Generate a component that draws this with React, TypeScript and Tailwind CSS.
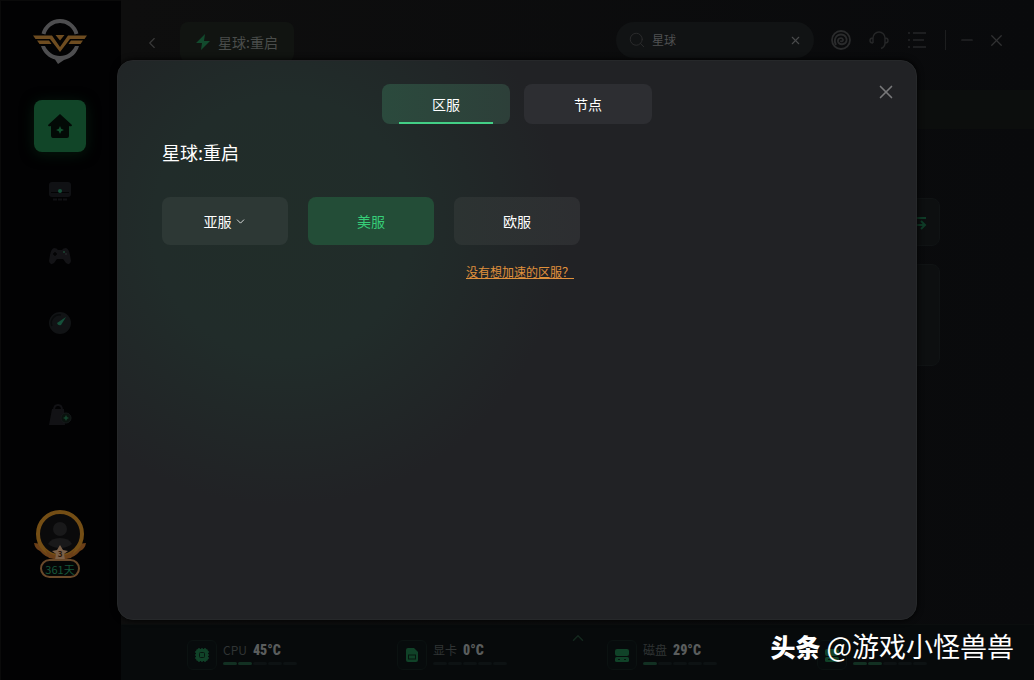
import { ChevronDown, ChevronLeft, ChevronUp, Minus, Search, X } from "lucide-react";

const sideLinks = [
  { label: "电脑", icon: <MonitorIcon />, gap: "mt-[25px]" },
  { label: "主机", icon: <GamepadIcon />, gap: "mt-[38px]" },
  { label: "测速", icon: <GaugeIcon />, gap: "mt-[38px]" },
  { label: "商城", icon: <BagIcon />, gap: "mt-[64px]" },
];

const stats = [
  { label: "CPU", value: "45°C", on: 2, icon: <CpuIcon /> },
  { label: "显卡", value: "0°C", on: 0, icon: <CardIcon /> },
  { label: "磁盘", value: "29°C", on: 1, icon: <DiskIcon /> },
  { label: "", value: "", on: 2, icon: <DiskIcon /> },
];

function Logo() {
  return (
    <svg width="54" height="46" viewBox="0 0 54 46" aria-hidden="true">
      <path d="M10.5 15A17 17 0 0 1 43.500 15" fill="none" stroke="#4e4e50" strokeWidth="4" />
      <path d="M8 27C10 34 16 39 22 40.500L25 45L31 41C39 39 44 34 46 27L42 27C39 33 34 37 27 37S15 33 12 27Z" fill="#4e4e50" />
      <path
        d="M0 16.500H19L27 28L35 16.500H54L51.500 20H37L27 33L17 20H2.500ZM4 21.500H16L18.500 25H6.500ZM38 21.500H50L47.500 25H35.500ZM22.500 16H31.500L27 21.500Z"
        fill="#6e4c20"
      />
    </svg>
  );
}

function HomeIcon() {
  return (
    <svg width="26" height="26" viewBox="0 0 26 26" aria-hidden="true">
      <path d="M13 1L1 12Q1 14 4 13V22Q4 25 6 25H20Q22 25 22 23V13Q25 14 25 12Z" fill="#030a06" />
      <path d="M13 13L14.2 15.8L17 17L14.2 18.2L13 21L11.8 18.2L9 17L11.8 15.8Z" fill="#12502d" />
    </svg>
  );
}

function MonitorIcon() {
  return (
    <svg width="24" height="24" viewBox="0 0 24 24" aria-hidden="true">
      <rect x="1" y="3" width="22" height="15" rx="3" fill="#101114" />
      <rect x="3" y="13" width="18" height="1" fill="#030304" />
      <path d="M5 20.500H19" stroke="#101114" strokeWidth="2" strokeDasharray="4 1" />
      <circle cx="12" cy="12" r="2" fill="#17503a" />
    </svg>
  );
}

function GamepadIcon() {
  return (
    <svg width="24" height="24" viewBox="0 0 24 24" aria-hidden="true">
      <path d="M6 3Q9 3 10 5H14Q15 3 18 3Q21 4 22 10L23 16Q22 21 18 18L15 14H9L6 18Q2 21 1 16L2 10Q3 4 6 3Z" fill="#131316" />
      <path d="M5 9H9M7 7V11" stroke="#030304" strokeWidth="1.4" />
      <circle cx="16" cy="7" r="1" fill="#1d4532" />
      <circle cx="18" cy="9" r="1" fill="#252528" />
    </svg>
  );
}

function GaugeIcon() {
  return (
    <svg width="24" height="24" viewBox="0 0 24 24" aria-hidden="true">
      <circle cx="12" cy="12" r="11" fill="#111315" />
      <path d="M4 15A8 8 0 0 1 13 4" fill="none" stroke="#080a0b" strokeWidth="1.5" />
      <path d="M18 6L13 14Q10 15 9 12Z" fill="#15503a" />
    </svg>
  );
}

function BagIcon() {
  return (
    <svg width="24" height="24" viewBox="0 0 24 24" aria-hidden="true">
      <path d="M6 7Q6 2 10 2T14 7" fill="none" stroke="#121215" strokeWidth="2" />
      <path d="M4 6H16L17 22H1Z" fill="#121215" />
      <circle cx="18" cy="15" r="5" fill="#0a120e" stroke="#15191a" />
      <path d="M18 12L19 14L21 15L19 16L18 18L17 16L15 15L17 14Z" fill="#14432c" />
    </svg>
  );
}

function Avatar() {
  return (
    <svg width="54" height="54" viewBox="0 0 54 54" aria-hidden="true">
      <path d="M1 34L10 35Q17 47 27 47T44 35L53 34Q52 40 47 42Q41 49 35 49L27 52L19 49Q13 49 7 42Q2 40 1 34Z" fill="#6b3f18" />
      <circle cx="27" cy="25" r="22" fill="#0a0a0b" stroke="#744e15" strokeWidth="4" />
      <circle cx="27" cy="20" r="7" fill="#19191a" />
      <path d="M15 35Q18 29 27 29T39 35Q34 39 27 39T15 35Z" fill="#19191a" />
      <path d="M12 40Q18 47 27 47T42 40L38 49L27 51L16 49Z" fill="#6b3f18" />
      <path d="M27 36L30 41L35 42L31 45L32 51H22L23 45L19 42L24 41Z" fill="#7b6048" />
      <text x="27" y="48" textAnchor="middle" fontSize="8" fontWeight="700" fill="#2a1709">3</text>
    </svg>
  );
}

function SwirlIcon() {
  return (
    <svg width="20" height="20" viewBox="0 0 20 20" fill="none" stroke="#2a2b2c" strokeWidth="1.8" aria-hidden="true">
      <circle cx="10" cy="10" r="9" />
      <path d="M5 15C2 10 5 4.500 10 4.500C15 4.500 16 9 15.500 11C14.500 15 8 15.500 7 11.500C6.500 8 11 7 12 9.500C12.500 11.500 10 12 9.500 10.500" />
    </svg>
  );
}

function HeadsetIcon() {
  return (
    <svg width="20" height="20" viewBox="0 0 20 20" fill="none" stroke="#252627" strokeWidth="1.500" aria-hidden="true">
      <path d="M4 13V8A6 6 0 0 1 16 8V13Q16 17 12 18.500M4 8Q1 8 1 10.500T4 13M16 8Q19 8 19 10.500T16 13" />
    </svg>
  );
}

function ListIcon() {
  return (
    <svg width="20" height="18" viewBox="0 0 20 18" stroke="#252627" strokeWidth="1.500" aria-hidden="true">
      <path d="M1 2H3M6 2H19M1 9H3M6 9H17M1 16H3M6 16H19" />
    </svg>
  );
}

function CpuIcon() {
  return (
    <svg width="16" height="16" viewBox="0 0 16 16" aria-hidden="true">
      <path d="M5 1V15M8 1V15M11 1V15M1 5H15M1 8H15M1 11H15" stroke="#104228" strokeWidth="1.500" />
      <rect x="2" y="2" width="12" height="12" rx="2" fill="#104228" />
      <rect x="5.500" y="5.500" width="5" height="5" rx="1" fill="none" stroke="#07160f" />
    </svg>
  );
}

function CardIcon() {
  return (
    <svg width="16" height="16" viewBox="0 0 16 16" aria-hidden="true">
      <path d="M4 1H10L14 5V13Q14 15 12 15H4Q2 15 2 13V3Q2 1 4 1Z" fill="#104228" />
      <rect x="4.500" y="8" width="7" height="4" fill="none" stroke="#07160f" />
    </svg>
  );
}

function DiskIcon() {
  return (
    <svg width="16" height="16" viewBox="0 0 16 16" aria-hidden="true">
      <rect x="1" y="2" width="14" height="7" rx="2" fill="#104228" />
      <rect x="1" y="10" width="14" height="5" rx="1.500" fill="#104228" />
      <path d="M4 12.500H6M10 12.500H12" stroke="#07160f" />
    </svg>
  );
}

function Sidebar() {
  return (
    <aside className="flex w-[121px] shrink-0 flex-col items-center border-t border-l border-[#0a0a0a] bg-[#020203] pt-[18px] pr-0.5">
      <Logo />
      <a
        href="#home"
        aria-label="首页"
        className="mt-[35px] flex size-[52px] items-center justify-center rounded-lg bg-[#114528] shadow-[0_2px_14px_#051a0d]"
      >
        <HomeIcon />
      </a>
      <nav className="flex flex-col items-center">
        {sideLinks.map((link) => (
          <a key={link.label} href="#" aria-label={link.label} className={`flex h-7 items-center ${link.gap}`}>
            {link.icon}
          </a>
        ))}
      </nav>
      <a href="#" className="mt-20 flex flex-col items-center">
        <Avatar />
        <span className="-mt-1 flex h-[19px] w-10 items-center justify-center rounded-full border-2 border-[#69492a] bg-[#050606] text-[11px] leading-3 text-[#16563a]">
          361天
        </span>
      </a>
    </aside>
  );
}

function Header() {
  return (
    <header className="flex items-start pt-[22px] pr-7 pl-[22px]">
      <button type="button" aria-label="返回" className="mt-3 text-[#3a3a3a]">
        <ChevronLeft size={18} strokeWidth={1.5} />
      </button>
      <div className="ml-[19px] flex h-10 w-[114px] items-center gap-1.5 rounded-lg bg-[#111411] pl-[14px] text-sm text-[#4a4d4b]">
        <svg width="18" height="18" viewBox="0 0 18 18" aria-hidden="true">
          <path d="M11 1L2 10H8L7 17L16 8H10Z" fill="#124a2d" />
        </svg>
        星球:重启
      </div>
      <label className="ml-auto flex h-9 w-[198px] items-center gap-1.5 rounded-full bg-[#111314] px-3 text-[#2c2d2e]">
        <Search size={18} strokeWidth={1.2} className="shrink-0" />
        <input
          type="text"
          aria-label="搜索"
          defaultValue="星球"
          className="w-full min-w-0 bg-transparent text-xs text-[#505152] outline-none"
        />
        <button type="button" aria-label="清除" className="shrink-0 text-[#4a4b4c]">
          <X size={13} strokeWidth={2} />
        </button>
      </label>
      <div className="ml-[17px] flex h-9 items-center gap-[18px]">
        <button type="button" aria-label="活动"><SwirlIcon /></button>
        <button type="button" aria-label="客服"><HeadsetIcon /></button>
        <button type="button" aria-label="菜单"><ListIcon /></button>
        <span className="h-5 w-px bg-[#1d1e1f]" />
      </div>
      <div className="ml-3 flex h-9 items-center gap-[11px] text-[#303132]">
        <button type="button" aria-label="最小化"><Minus size={18} strokeWidth={1.6} /></button>
        <button type="button" aria-label="关闭窗口"><X size={19} strokeWidth={1.6} /></button>
      </div>
    </header>
  );
}

function StatBar() {
  return (
    <footer className="relative mt-auto grid h-14 grid-cols-4 items-center border-t border-[#0b0e0e] bg-[#070a0b] pt-1 pr-[7px] pl-[66px]">
      <button type="button" aria-label="展开" className="absolute top-1 left-1/2 -translate-x-1/2 text-[#14281e]">
        <ChevronUp size={18} strokeWidth={2} />
      </button>
      {stats.map((s, i) => (
        <div key={i} className="flex items-center gap-1.5">
          <div className="flex size-[30px] items-center justify-center rounded-md border border-[#0b1211] bg-[#070b0c]">
            {s.icon}
          </div>
          <div className="flex flex-col gap-0.5 pb-1">
            <div className="flex h-5 items-center gap-1.5 text-xs text-[#303434]">
              {s.label}
              <b className="font-['Roboto_Condensed','Liberation_Sans_Narrow','Roboto','Noto_Sans_CJK_SC',sans-serif] text-sm font-black text-[#5a5d5d]">
                {s.value}
              </b>
            </div>
            <div className="flex gap-px">
              {[0, 1, 2, 3, 4].map((n) => (
                <span key={n} className={`h-[3px] w-3.5 rounded-full ${n < s.on ? "bg-[#123022]" : "bg-[#0d1213]"}`} />
              ))}
            </div>
          </div>
        </div>
      ))}
    </footer>
  );
}

function ServerDialog() {
  return (
    <div
      role="dialog"
      aria-label="选择区服"
      className="relative flex h-[560px] w-[800px] flex-col rounded-2xl border border-[#26282a] bg-[#212225] bg-[radial-gradient(circle_at_165px_165px,#212d29_0,#212c2a_130px,#212225_280px)] px-11 pt-[23px] shadow-[0_0_6px_#000]"
    >
      <button type="button" aria-label="关闭" className="absolute top-5 right-[19px] text-[#77787a]">
        <X size={22} strokeWidth={1.8} />
      </button>

      {/* tabs */}
      <div role="tablist" className="flex justify-center gap-3.5 text-sm text-white">
        <button
          type="button"
          role="tab"
          aria-selected="true"
          className="relative h-10 w-32 rounded-lg bg-linear-to-r from-[#2b4a3d] to-[#2d3f39]"
        >
          区服
          <span className="absolute inset-x-[17px] bottom-0 h-0.5 bg-[#43cf86]" />
        </button>
        <button type="button" role="tab" aria-selected="false" className="h-10 w-32 rounded-lg bg-[#2d2e32]">
          节点
        </button>
      </div>

      <h1 className="mt-3.5 text-lg leading-7 text-white">星球:重启</h1>

      {/* servers */}
      <div className="mt-[31px] flex gap-5 text-sm text-white">
        <button type="button" className="flex h-12 w-[126px] items-center justify-center gap-0.5 rounded-lg bg-[#2d3835]">
          亚服
          <ChevronDown size={13} strokeWidth={1.5} />
        </button>
        <button type="button" className="h-12 w-[126px] rounded-lg bg-[#234d37] text-[#36ce78]">
          美服
        </button>
        <button type="button" className="h-12 w-[126px] rounded-lg bg-linear-to-r from-[#2c3332] to-[#2d2e31]">
          欧服
        </button>
      </div>
      <a href="#" className="mt-[17px] ml-[304px] self-start text-xs leading-5 text-[#e0913c] underline">
        没有想加速的区服？
      </a>
    </div>
  );
}

export default function App() {
  return (
    <div className="relative flex min-h-screen bg-[#090b0b] font-['Noto_Sans_CJK_SC',sans-serif]">
      <Sidebar />
      <main className="flex min-w-0 flex-1 flex-col bg-linear-to-r from-[#0e0e0e] to-[#090a0c]">
        <Header />
        <div className="mt-7 h-[39px] bg-[#0c0e0d]" />
        <div className="mt-[69px] mr-[94px] flex h-12 items-center justify-end rounded-lg border border-[#101314] bg-[#0d0f10] pr-3">
          <svg width="16" height="16" viewBox="0 0 16 16" fill="none" stroke="#0f3b27" strokeWidth="2" aria-hidden="true">
            <path d="M15 4H2M2 11H13M10 7L14 11L10 15" />
          </svg>
        </div>
        <div className="mt-[18px] mr-[94px] mb-6 h-[102px] rounded-lg border border-[#101314] bg-[#0d0f10]" />
        <StatBar />
      </main>

      {/* modal */}
      <div className="absolute inset-0 flex items-center justify-center">
        <ServerDialog />
      </div>

      {/* watermark */}
      <div className="absolute right-5 bottom-3.5 flex items-center gap-1.5 leading-10 text-white">
        <b className="text-[25px] font-black">头条</b>
        <span className="text-[27px]">@游戏小怪兽兽</span>
      </div>
    </div>
  );
}
